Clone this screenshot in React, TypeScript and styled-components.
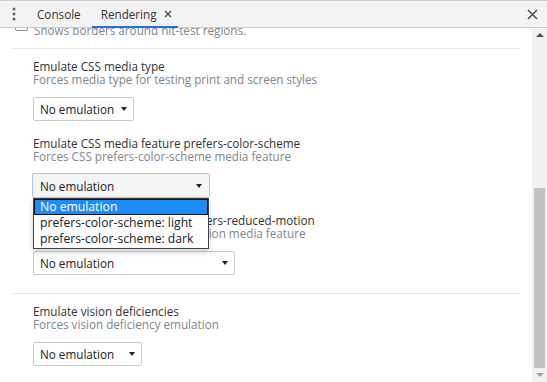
import React from "react";
import styled, { createGlobalStyle } from "styled-components";

const Global = createGlobalStyle`
  html, body { margin: 0; padding: 0; background: #fff; }
  body { font-family: "Open Sans", "DejaVu Sans", sans-serif; font-size: 11.7px; color: #333; }
  #root { width: 547px; height: 382px; overflow: hidden; }
`;

const Frame = styled.div`
  width: 547px;
  height: 382px;
  display: flex;
  flex-direction: column;
  overflow: hidden;
`;

const TabBar = styled.div`
  height: 26px;
  flex: none;
  display: flex;
  align-items: stretch;
  background: #f3f3f3;
  border-top: 1px solid #d0d0d0;
  border-bottom: 1px solid #cbcbcb;
  position: relative;
  z-index: 2;
`;

const MenuButton = styled.div`
  width: 28px;
  display: flex;
  align-items: center;
  justify-content: center;
`;

const Tab = styled.div<{ $active?: boolean }>`
  display: flex;
  align-items: center;
  gap: 7px;
  padding: 1px ${(p) => (p.$active ? "6px" : "9px")} 0 9px;
  margin-left: ${(p) => (p.$active ? "2px" : "0")};
  color: #333;
  font-size: 11.7px;
  border-bottom: 2px solid ${(p) => (p.$active ? "#1a73e8" : "transparent")};
  margin-bottom: -1px;
`;

const Spacer = styled.div`
  flex: 1;
`;

const CloseAll = styled.div`
  width: 30px;
  display: flex;
  align-items: center;
  justify-content: center;
`;

const Body = styled.div`
  flex: 1;
  display: flex;
  min-height: 0;
`;

const Content = styled.div`
  flex: 1;
  position: relative;
  overflow: hidden;
  padding-left: 12px;
  padding-right: 12px;
`;

const Partial = styled.div`
  margin-top: -4px;
  display: flex;
  align-items: flex-start;
  gap: 6px;
  padding-left: 3px;
  padding-bottom: 11px;
  border-bottom: 1px solid #e8e8e8;
  color: #80868b;
  line-height: 13px;
`;

const Check = styled.div`
  width: 11px;
  height: 11px;
  border: 1px solid #8a8a8a;
  border-radius: 2px;
  margin-top: -6px;
  flex: none;
`;

const Section = styled.div<{ $divider?: boolean }>`
  padding: 11px 0 0 21px;
  padding-bottom: ${(p) => (p.$divider ? "13px" : "0")};
  border-bottom: ${(p) => (p.$divider ? "1px solid #e8e8e8" : "none")};
`;

const Title = styled.div`
  color: #333;
  line-height: 13px;
`;

const Subtitle = styled.div`
  color: #80868b;
  line-height: 13px;
`;

const SelectBox = styled.div<{ $w: number; $focus?: boolean }>`
  position: relative;
  width: ${(p) => p.$w}px;
  height: ${(p) => (p.$focus ? 25 : 24)}px;
  box-sizing: border-box;
  margin-top: ${(p) => (p.$focus ? 10 : 11)}px;
  margin-bottom: 5px;
  margin-left: ${(p) => (p.$focus ? -1 : 0)}px;
  border: 1px solid ${(p) => (p.$focus ? "#a9c8f2" : "#cacaca")};
  border-radius: 2px;
  background: ${(p) => (p.$focus ? "#f5f5f5" : "#fff")};
  display: flex;
  align-items: center;
  justify-content: space-between;
  padding: 0 ${(p) => (p.$focus ? 7 : 6)}px 0 ${(p) => (p.$focus ? 7 : 6)}px;
  color: #222;
`;

const Caret = styled.span`
  width: 0;
  height: 0;
  border-left: 3.5px solid transparent;
  border-right: 3.5px solid transparent;
  border-top: 4px solid #222;
`;

const Popup = styled.div`
  position: absolute;
  left: 0px;
  top: 24px;
  width: 176px;
  box-sizing: border-box;
  border: 1px solid #444;
  background: #fff;
  box-shadow: 0 3px 6px rgba(0, 0, 0, 0.18);
  z-index: 5;
  padding: 0 0 1px;
`;

const Option = styled.div<{ $sel?: boolean }>`
  height: 16px;
  line-height: 14px;
  box-sizing: border-box;
  font-size: 12.2px;
  color: ${(p) => (p.$sel ? "#fff" : "#222")};
  background: ${(p) => (p.$sel ? "#1e8cf8" : "transparent")};
  border: ${(p) => (p.$sel ? "1px solid #111" : "none")};
  padding-left: ${(p) => (p.$sel ? "5px" : "6px")};
  padding-top: ${(p) => (p.$sel ? "0" : "1px")};
`;

const ScrollBar = styled.div`
  width: 15px;
  flex: none;
  background: #f1f1f1;
  display: flex;
  flex-direction: column;
  align-items: center;
`;

const Arrow = styled.div<{ $down?: boolean }>`
  height: 14px;
  flex: none;
  display: flex;
  align-items: center;
  justify-content: center;
  &::after {
    content: "";
    border-left: 4px solid transparent;
    border-right: 4px solid transparent;
    ${(p) =>
      p.$down
        ? "border-top: 4px solid #a3a3a3;"
        : "border-bottom: 4px solid #505050;"}
  }
`;

const Track = styled.div`
  flex: 1;
  width: 100%;
  display: flex;
  flex-direction: column;
  justify-content: flex-end;
  align-items: center;
`;

const Thumb = styled.div`
  width: 11px;
  height: 180px;
  background: #c1c1c1;
`;

function Select({ w, focus, children }: { w: number; focus?: boolean; children?: React.ReactNode }) {
  return (
    <SelectBox $w={w} $focus={focus}>
      <span>No emulation</span>
      <Caret />
      {children}
    </SelectBox>
  );
}

export default function App() {
  return (
    <Frame>
      <Global />
      <TabBar>
        <MenuButton>
          <svg width="4" height="14" viewBox="0 0 4 14">
            <circle cx="2" cy="2" r="1.5" fill="#5f6368" />
            <circle cx="2" cy="7" r="1.5" fill="#5f6368" />
            <circle cx="2" cy="12" r="1.5" fill="#5f6368" />
          </svg>
        </MenuButton>
        <Tab>Console</Tab>
        <Tab $active>
          Rendering
          <svg width="8" height="8" viewBox="0 0 8 8">
            <path d="M1 1L7 7M7 1L1 7" stroke="#444" strokeWidth="1.3" />
          </svg>
        </Tab>
        <Spacer />
        <CloseAll>
          <svg width="11" height="11" viewBox="0 0 11 11">
            <path d="M1 1L10 10M10 1L1 10" stroke="#555" strokeWidth="1.6" />
          </svg>
        </CloseAll>
      </TabBar>
      <Body>
        <Content>
          <Partial>
            <Check />
            <span>Shows borders around hit-test regions.</span>
          </Partial>
          <Section>
            <Title>Emulate CSS media type</Title>
            <Subtitle>Forces media type for testing print and screen styles</Subtitle>
            <Select w={101} />
          </Section>
          <Section>
            <Title>Emulate CSS media feature prefers-color-scheme</Title>
            <Subtitle>Forces CSS prefers-color-scheme media feature</Subtitle>
            <Select w={178} focus>
              <Popup>
                <Option $sel>No emulation</Option>
                <Option>prefers-color-scheme: light</Option>
                <Option>prefers-color-scheme: dark</Option>
              </Popup>
            </Select>
          </Section>
          <Section $divider>
            <Title>Emulate CSS media feature prefers-reduced-motion</Title>
            <Subtitle>Forces CSS prefers-reduced-motion media feature</Subtitle>
            <Select w={202} />
          </Section>
          <Section>
            <Title>Emulate vision deficiencies</Title>
            <Subtitle>Forces vision deficiency emulation</Subtitle>
            <Select w={109} />
          </Section>
        </Content>
        <ScrollBar>
          <Arrow />
          <Track>
            <Thumb />
          </Track>
          <Arrow $down />
        </ScrollBar>
      </Body>
    </Frame>
  );
}
